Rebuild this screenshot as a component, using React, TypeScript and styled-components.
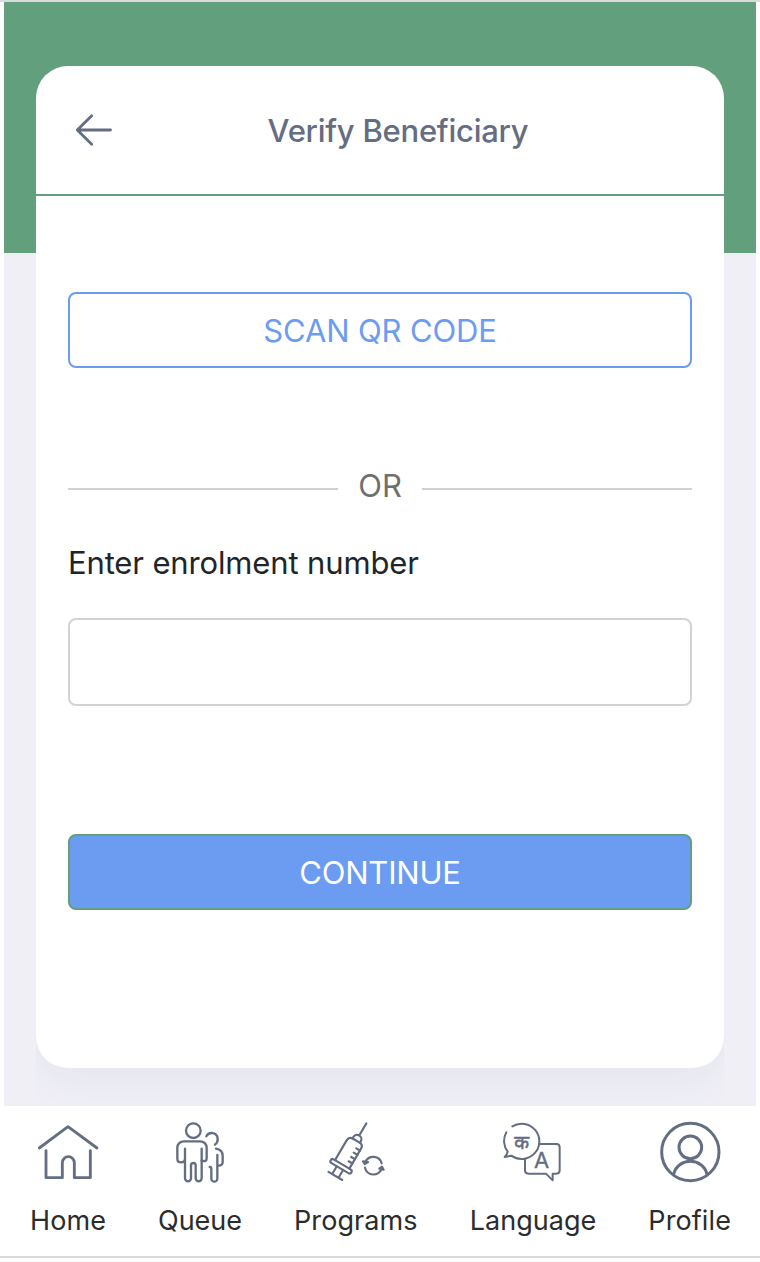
import React from "react";
import styled, { createGlobalStyle } from "styled-components";

const slate = "#646d82";
const green = "#629f7d";
const blue = "#6c9bf2";

const GlobalStyle = createGlobalStyle`
  * { box-sizing: border-box; }
  body { margin: 0; background: #fff; font-family: Inter, "Liberation Sans", sans-serif; }
`;

const Page = styled.div`
  height: 1262px;
  display: flex;
  flex-direction: column;
  border-top: 2px solid #d9dbdd;
  overflow: hidden;
`;

const Main = styled.main`
  height: 1104px;
  margin: 0 4px;
  padding: 64px 32px 0;
  background: linear-gradient(${green} 251px, #f0eff6 251px);
`;

const Card = styled.section`
  height: 1002px;
  border-radius: 32px;
  background: #fff;
  box-shadow: 0 12px 36px rgba(150, 170, 180, 0.12);
  clip-path: inset(0 0 -38px 0);
`;

const CardHeader = styled.header`
  height: 130px;
  display: flex;
  align-items: center;
  padding: 2px 42px 2px 38px;
  border-bottom: 2px solid ${green};
`;

const BackButton = styled.button`
  width: 40px;
  height: 40px;
  padding: 0;
  border: 0;
  background: none;
  svg { display: block; }
`;

const Title = styled.h1`
  flex: 1;
  margin: 0;
  padding-top: 2px;
  text-align: center;
  color: ${slate};
  font-size: 31px;
  font-weight: 500;
  line-height: 40px;
  letter-spacing: -0.25px;
`;

const Form = styled.form`
  display: flex;
  flex-direction: column;
  padding: 96px 32px 0;
`;

const ActionButton = styled.button<{ $primary?: boolean }>`
  height: 76px;
  padding: 2px 0 0;
  border: 2px solid ${(p) => (p.$primary ? green : blue)};
  border-radius: 8px;
  background: ${(p) => (p.$primary ? blue : "#fff")};
  color: ${(p) => (p.$primary ? "#fff" : blue)};
  font: 400 31px/40px Inter, sans-serif;
  letter-spacing: ${(p) => (p.$primary ? "-0.2px" : "-0.15px")};
`;

const Divider = styled.div`
  display: flex;
  align-items: center;
  margin-top: 97px;
  height: 48px;
  color: #6f6f6f;
  font-size: 31px;
  line-height: 40px;
`;

const Rule = styled.span`
  flex: 1;
  height: 2px;
  background: #ced2d6;
`;

const DividerText = styled.span`
  width: 84px;
  padding-bottom: 7px;
  text-align: center;
`;

const Label = styled.label`
  margin-top: 30px;
  height: 40px;
  color: #212529;
  font-size: 31px;
  line-height: 40px;
  letter-spacing: -0.14px;
`;

const Input = styled.input`
  height: 88px;
  margin: 35px 0 128px;
  padding: 0 24px;
  border: 2px solid #d0d2d3;
  border-radius: 8px;
  background: #fff;
  font: 400 31px Inter, sans-serif;
  outline: none;
`;

const Nav = styled.nav`
  height: 152px;
  display: flex;
  justify-content: space-between;
  padding: 14px 29px 0 30px;
  border-bottom: 2px solid #d8d9da;
  background: #fff;
`;

const NavItem = styled.a`
  display: flex;
  flex-direction: column;
  align-items: center;
  color: #2c2c2c;
  font-size: 27px;
  line-height: 36px;
  svg { margin-bottom: 19px; display: block; }
`;

const NavLabel = styled.span<{ $spacing: number }>`
  letter-spacing: ${(p) => p.$spacing}px;
`;

const Icon = styled.svg`
  fill: none;
  stroke: ${slate};
  stroke-linecap: round;
  stroke-linejoin: round;
`;

const Glyph = styled.text`
  fill: ${slate};
  stroke: ${slate};
  text-anchor: middle;
  font-family: Inter, "Noto Sans", "Noto Sans Devanagari", sans-serif;
`;

const HomeIcon = () => (
  <Icon width="64" height="64" viewBox="48 29 192 192" strokeWidth="8.5">
    <path d="M58 113 144 49 231 113" />
    <path d="M78 121V202H127V157a18 18 0 0 1 36 0V202H211V121" />
  </Icon>
);

const QueueIcon = () => (
  <Icon width="64" height="64" viewBox="54 29 192 192" strokeWidth="7">
    <circle cx="130" cy="61" r="22" />
    <path d="M105 146Q105 156 93 156 82 156 82 145V112a19 19 0 0 1 19-19h50a19 19 0 0 1 19 19V144Q170 156 155 151" />
    <path d="M105 115V204a9 9 0 0 0 18 0V165a7 7 0 0 1 14 0V204a9 9 0 0 0 18 0V115" />
    <path d="M169 78A18 18 0 0 1 203 85Q204 96 195 103" />
    <path d="M198 115Q218 119 218 136V155Q218 166 205 166" />
    <path d="M202 134V205a9 9 0 0 1-18 0V176Q184 169 179 170" />
  </Icon>
);

const ProgramsIcon = () => (
  <Icon width="64" height="64" viewBox="117 30 192 192" strokeWidth="6.5">
    <g transform="translate(244 40) rotate(30.5)">
      <path d="M0 0V43M-13 60V55a13 13 0 0 1 26 0v5" />
      <path d="M-25 143V74Q-25 60-11 60H11Q25 60 25 74V143" />
      <path d="M25 80H12M25 95H12M25 110H12M25 125H12" />
      <rect x="-36" y="143" width="72" height="13" rx="6.5" />
      <path d="M-11 156V182M11 156V182M-24 183H24" />
    </g>
    <path d="M241 156A26 26 0 0 1 290 160M290 176A26 26 0 0 1 240 173" />
    <path d="M234 154 249 156 239 162ZM296 179 283 176 291 170Z" fill={slate} />
  </Icon>
);

const LanguageIcon = () => (
  <Icon width="64" height="64" viewBox="124 30 192 192" strokeWidth="6">
    <path d="M158 49A53 53 0 1 1 155 137L135 141Q143 133 144 125A53 53 0 0 1 140 67" />
    <path d="M239 102H290Q300 102 300 112V181Q300 191 290 191H279V211L259 191H206Q196 191 196 181V147" />
    <Glyph x="186" y="118" fontSize="58" strokeWidth="1.6">क</Glyph>
    <Glyph x="246" y="174" fontSize="66" strokeWidth="1">A</Glyph>
  </Icon>
);

const ProfileIcon = () => (
  <Icon width="64" height="64" viewBox="53 60 192 192" strokeWidth="9">
    <circle cx="150" cy="156" r="86" />
    <circle cx="150" cy="142" r="34" />
    <path d="M101 220A50 45 0 0 1 199 220" />
  </Icon>
);

const navItems = [
  { label: "Home", icon: <HomeIcon />, spacing: 0.1 },
  { label: "Queue", icon: <QueueIcon />, spacing: 0 },
  { label: "Programs", icon: <ProgramsIcon />, spacing: 0.1 },
  { label: "Language", icon: <LanguageIcon />, spacing: 0.05 },
  { label: "Profile", icon: <ProfileIcon />, spacing: 0.1 },
];

export default function App() {
  return (
    <>
      <GlobalStyle />
      <Page>
        <Main>
          <Card>
            <CardHeader>
              <BackButton type="button" aria-label="Back">
                <Icon width="40" height="40" viewBox="0 0 40 40" strokeWidth="2.8">
                  <path d="M36.5 20H3.3M17.7 5.7 3.3 20 17.7 34.3" />
                </Icon>
              </BackButton>
              <Title>Verify Beneficiary</Title>
            </CardHeader>
            <Form>
              <ActionButton type="button">SCAN QR CODE</ActionButton>
              <Divider>
                <Rule />
                <DividerText>OR</DividerText>
                <Rule />
              </Divider>
              <Label htmlFor="enrolment">Enter enrolment number</Label>
              <Input id="enrolment" />
              <ActionButton type="button" $primary>CONTINUE</ActionButton>
            </Form>
          </Card>
        </Main>
        <Nav>
          {navItems.map((item) => (
            <NavItem key={item.label}>
              {item.icon}
              <NavLabel $spacing={item.spacing}>{item.label}</NavLabel>
            </NavItem>
          ))}
        </Nav>
      </Page>
    </>
  );
}
